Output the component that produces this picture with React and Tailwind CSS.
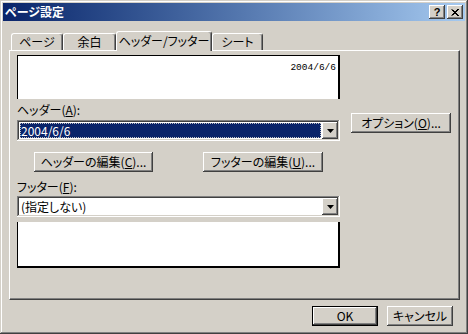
import React from "react";

// Windows 2000 classic 3D edges
const raised =
  "bg-[#d4d0c8] shadow-[inset_-1px_-1px_0_#404040,inset_1px_1px_0_#ffffff,inset_-2px_-2px_0_#808080,inset_2px_2px_0_#d4d0c8]";
const sunken =
  "shadow-[inset_-1px_-1px_0_#ffffff,inset_1px_1px_0_#808080,inset_-2px_-2px_0_#d4d0c8,inset_2px_2px_0_#404040]";

function Arrow() {
  return (
    <svg width="7" height="4" viewBox="0 0 7 4">
      <polygon points="0,0 7,0 3.5,4" fill="#000" />
    </svg>
  );
}

function Combo({ children, selected }) {
  return (
    <div className={`flex h-[21px] w-[323px] p-[2px] bg-white ${sunken}`}>
      <div className="flex-1 p-[1px] bg-white">
        <div
          className={
            selected
              ? "h-full flex items-center pl-[1px] bg-[#0a246a] text-white outline-1 outline-dotted outline-offset-[-1px] outline-[#c0c0c0]"
              : "h-full flex items-center pl-[1px] text-black"
          }
        >
          {children}
        </div>
      </div>
      <div className={`w-[16px] h-[17px] flex items-center justify-center ${raised}`}>
        <Arrow />
      </div>
    </div>
  );
}

function Btn({ children, className = "" }) {
  return (
    <div className={`flex items-center justify-center h-[20px] ${raised} ${className}`}>
      {children}
    </div>
  );
}

function Tab({ label, active, className = "" }) {
  return (
    <div
      className={`flex items-center justify-center bg-[#d4d0c8] border-t border-l border-r border-t-white border-l-white border-r-[#404040] rounded-t-[3px] shadow-[inset_-1px_0_0_#808080] ${
        active ? "h-[20px] mb-[-1px] relative z-10 pb-[2px]" : "h-[17px]"
      } ${className}`}
    >
      {label}
    </div>
  );
}

export default function App() {
  return (
    <div className="w-[468px] h-[334px] p-[3px] flex flex-col bg-[#d4d0c8] text-[12px] leading-[14px] text-black font-['Noto_Sans_CJK_JP',sans-serif] [font-feature-settings:'palt'] shadow-[inset_-1px_-1px_0_#404040,inset_1px_1px_0_#d4d0c8,inset_-2px_-2px_0_#808080,inset_2px_2px_0_#ffffff]">
      {/* title bar */}
      <div className="h-[18px] flex items-center bg-linear-to-r from-[#0a246a] to-[#a6caf0]">
        <span className="pl-[2px] text-white font-bold text-[12px]">ページ設定</span>
        <div className="ml-auto mr-[2px] flex gap-[2px]">
          <div className={`w-[16px] h-[14px] flex items-center justify-center ${raised}`}>
            <span className="font-['Liberation_Sans',sans-serif] font-bold text-[11px] leading-none">?</span>
          </div>
          <div className={`w-[16px] h-[14px] flex items-center justify-center ${raised}`}>
            <svg width="8" height="7" viewBox="0 0 8 7">
              <path d="M0.5 0.5 L7 7 M1.5 0.5 L8 7 M7 0 L0.5 6.5 M8 0 L1.5 6.5" stroke="#000" strokeWidth="1" />
            </svg>
          </div>
        </div>
      </div>

      {/* tabs */}
      <div className="mt-[10px] ml-[8px] flex items-end h-[19px]">
        <Tab label="ページ" className="w-[52px]" />
        <Tab label="余白" className="w-[53px]" />
        <Tab label="ヘッダー/フッター" active className="w-[96px]" />
        <Tab label="シート" className="w-[51px]" />
      </div>

      {/* panel */}
      <div className="ml-[6px] w-[451px] h-[250px] border-t border-l border-r border-b border-t-white border-l-white border-r-[#404040] border-b-[#404040] shadow-[inset_-1px_-1px_0_#808080] flex">
        <div className="ml-[7px] mt-[4px] w-[323px] flex flex-col">
          <div className="h-[44px] bg-white border-t border-l border-r-2 border-black flex justify-end pr-[2px] pt-[6px]">
            <span className="font-['Liberation_Mono',monospace] text-[9.5px] leading-[12px]">2004/6/6</span>
          </div>
          <div className="mt-[4px] h-[14px]">
            ヘッダー(<span className="underline">A</span>):
          </div>
          <div className="mt-[3px]">
            <Combo selected>2004/6/6</Combo>
          </div>
          <div className="mt-[11px] flex">
            <Btn className="ml-[17px] w-[119px]">
              ヘッダーの編集(<span className="underline">C</span>)...
            </Btn>
            <Btn className="ml-[50px] w-[120px]">
              フッターの編集(<span className="underline">U</span>)...
            </Btn>
          </div>
          <div className="mt-[8px] h-[14px]">
            フッター(<span className="underline">F</span>):
          </div>
          <div className="mt-[2px]">
            <Combo>(指定しない)</Combo>
          </div>
          <div className="mt-[5px] h-[46px] bg-white border-l border-r-2 border-b-2 border-black" />
        </div>
        <div className="ml-[11px] mt-[62px]">
          <Btn className="w-[100px]">
            オプション(<span className="underline">O</span>)...
          </Btn>
        </div>
      </div>

      {/* dialog buttons */}
      <div className="mt-[6px] pr-[12px] flex justify-end gap-[9px]">
        <div className="w-[66px] h-[20px] border border-black">
          <div className={`h-full flex items-center justify-center ${raised}`}>OK</div>
        </div>
        <Btn className="w-[66px]">キャンセル</Btn>
      </div>
    </div>
  );
}
